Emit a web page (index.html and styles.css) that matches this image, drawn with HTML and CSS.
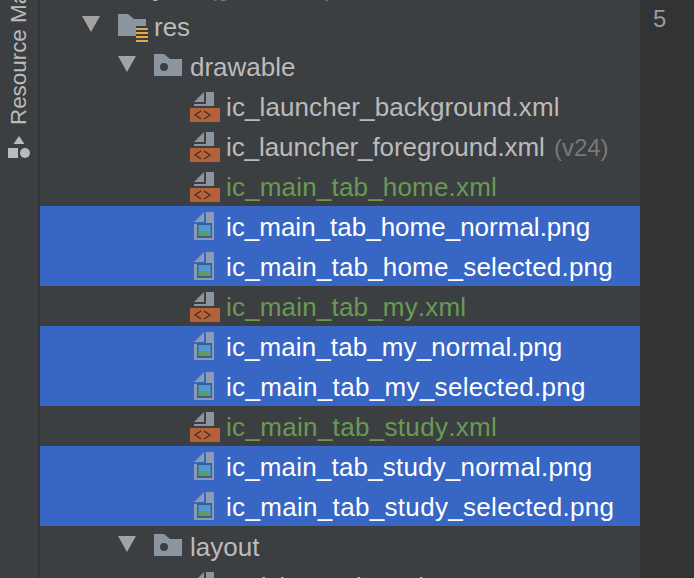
FILE: index.html
```html
<!DOCTYPE html>
<html lang="en">
<head>
  <meta charset="UTF-8">
  <title>Project tree</title>
  <link rel="stylesheet" href="styles.css">
</head>
<body>
  <!-- shared icons -->
  <svg class="defs" width="0" height="0">
    <symbol id="arrow" viewBox="0 0 18 16"><path d="M0 0H18L9 16Z" fill="#a3a3a3"/></symbol>
    <symbol id="folder" viewBox="0 0 28 22"><path d="M0 0H10L16 5H28V22H0Z" fill="#8c96a0"/><circle cx="10" cy="13" r="4" fill="#3c3f41"/></symbol>
    <symbol id="res" viewBox="0 0 30 29"><path d="M0 0H10L16 5H28V12H18V22H0Z" fill="#8c96a0"/><path d="M18 14H30V16H18ZM18 18H30V20H18ZM18 22H30V24H18ZM18 26H30V28H18Z" fill="#e2a94a"/></symbol>
    <symbol id="xml" viewBox="0 0 30 30"><path d="M14 0V10H4ZM16 0H24V14H4V12H16Z" fill="#8c96a0"/><rect y="16" width="30" height="14" fill="#b5623a"/><path d="M11 19L5 23L11 27M14 19L20 23L14 27" fill="none" stroke="#4a3328" stroke-width="1.5"/></symbol>
    <symbol id="png" viewBox="0 0 20 28"><path d="M10 0V10H0ZM12 0H20V28H0V12H12Z" fill="#8a9bb6"/><rect x="3" y="11" width="15" height="15" fill="#3f5c92"/><rect x="4.500" y="13" width="12" height="11" fill="#4e9ad6"/><path d="M4.500 24V20C8 17 12 19 16.500 22V24Z" fill="#5f9e63"/></symbol>
  </svg>

  <div class="window">
    <div class="strip">
      <div class="strip-label">Resource Manager</div>
      <svg class="strip-icon" width="22" height="22" viewBox="0 0 22 22">
        <path d="M11 0L16.500 8H5.500Z" fill="#bbb"/>
        <rect x="0" y="12" width="10" height="10" fill="#bbb"/>
        <circle cx="17" cy="17" r="5" fill="#bbb"/>
      </svg>
    </div>

    <div class="tree">
      <div class="row depth-1"><span class="arrow-slot"></span><span class="icon-slot"></span><span class="name">java <span class="hint">(generated)</span></span></div>

      <div class="row depth-1">
        <svg class="arrow"><use href="#arrow"/></svg>
        <svg class="folder-res"><use href="#res"/></svg>
        <span class="name">res</span>
      </div>
      <div class="row depth-2">
        <svg class="arrow"><use href="#arrow"/></svg>
        <svg class="folder"><use href="#folder"/></svg>
        <span class="name">drawable</span>
      </div>

      <div class="row depth-3"><svg class="file-xml"><use href="#xml"/></svg><span class="name fit-a">ic_launcher_background.xml</span></div>
      <div class="row depth-3"><svg class="file-xml"><use href="#xml"/></svg><span class="name fit-neg">ic_launcher_foreground.xml <span class="hint version">(v24)</span></span></div>
      <div class="row depth-3 added"><svg class="file-xml"><use href="#xml"/></svg><span class="name fit-b">ic_main_tab_home.xml</span></div>
      <div class="row depth-3 selected"><svg class="file-png"><use href="#png"/></svg><span class="name">ic_main_tab_home_normal.png</span></div>
      <div class="row depth-3 selected"><svg class="file-png"><use href="#png"/></svg><span class="name fit-b">ic_main_tab_home_selected.png</span></div>
      <div class="row depth-3 added"><svg class="file-xml"><use href="#xml"/></svg><span class="name fit-b">ic_main_tab_my.xml</span></div>
      <div class="row depth-3 selected"><svg class="file-png"><use href="#png"/></svg><span class="name fit-a">ic_main_tab_my_normal.png</span></div>
      <div class="row depth-3 selected"><svg class="file-png"><use href="#png"/></svg><span class="name fit-c">ic_main_tab_my_selected.png</span></div>
      <div class="row depth-3 added"><svg class="file-xml"><use href="#xml"/></svg><span class="name fit-c">ic_main_tab_study.xml</span></div>
      <div class="row depth-3 selected"><svg class="file-png"><use href="#png"/></svg><span class="name fit-b">ic_main_tab_study_normal.png</span></div>
      <div class="row depth-3 selected"><svg class="file-png"><use href="#png"/></svg><span class="name fit-c">ic_main_tab_study_selected.png</span></div>

      <div class="row depth-2">
        <svg class="arrow"><use href="#arrow"/></svg>
        <svg class="folder"><use href="#folder"/></svg>
        <span class="name">layout</span>
      </div>
      <div class="row depth-3"><svg class="file-xml"><use href="#xml"/></svg><span class="name">activity_main.xml</span></div>
    </div>

    <div class="gutter">5</div>
  </div>
</body>
</html>
```

FILE: styles.css
```css
html, body {
  height: 100%;
  margin: 0;
  overflow: hidden;
}

body {
  background: #3c3f41;
  color: #bbbbbb;
  font-family: "Liberation Sans", Arial, sans-serif;
  font-kerning: none;
}

.defs {
  display: block;
  height: 0;
}

.window {
  display: flex;
  height: 578px;
  overflow: hidden;
}

/* left tool window bar */
.strip {
  width: 38px;
  flex: none;
  border-right: 2px solid #333536;
  display: flex;
  flex-direction: column;
  align-items: center;
  gap: 11px;
}

.strip-label {
  height: 125px;
  overflow: hidden;
  white-space: nowrap;
  writing-mode: vertical-rl;
  transform: rotate(180deg);
  font-size: 22.4px;
  line-height: 24px;
}

.strip-icon {
  flex: none;
}

/* project tree */
.tree {
  width: 600px;
  flex: none;
  margin-top: -34px;
}

.row {
  height: 40px;
  display: flex;
  align-items: center;
  font-size: 26px;
  white-space: nowrap;
}

.depth-1 { padding-left: 42px; }
.depth-2 { padding-left: 78px; }
.depth-3 { padding-left: 150px; }

.selected {
  background: #3866c4;
  color: #ffffff;
}

.added {
  color: #6a9955;
}

.hint {
  color: #787878;
  font-size: 24px;
}

.version {
  margin-left: 2px;
  letter-spacing: 0;
}

/* the names run a little wider or narrower than Liberation Sans */
.fit-a { letter-spacing: 0.1px; }
.fit-b { letter-spacing: 0.18px; }
.fit-c { letter-spacing: 0.32px; }
.fit-neg { letter-spacing: -0.08px; }

.arrow,
.arrow-slot {
  width: 18px;
  height: 16px;
  flex: none;
  margin-right: 18px;
  margin-top: -4px;
}

.folder {
  width: 28px;
  height: 22px;
  flex: none;
  margin-right: 8px;
  margin-top: -2px;
}

.folder-res {
  width: 30px;
  height: 29px;
  flex: none;
  margin-right: 6px;
  margin-top: 5px;
}

.icon-slot {
  width: 36px;
  flex: none;
}

.file-xml {
  width: 30px;
  height: 30px;
  flex: none;
  margin-top: 2px;
  margin-right: 6px;
}

.file-png {
  width: 20px;
  height: 28px;
  flex: none;
  margin-left: 4px;
  margin-right: 12px;
}

.name {
  position: relative;
  top: 1px;
}

/* editor gutter */
.gutter {
  flex: 1;
  background: #313335;
  padding: 5px 0 0 13px;
  font-size: 24px;
  line-height: 28px;
  color: #9a9a9a;
}
```
